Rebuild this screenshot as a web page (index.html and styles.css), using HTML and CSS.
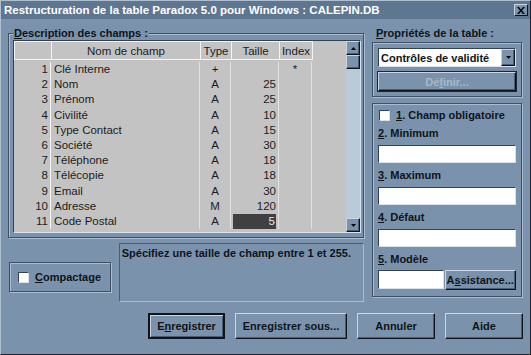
FILE: index.html
```html
<!DOCTYPE html>
<html lang="fr">
  <head>
    <meta charset="UTF-8" />
    <title>Restructuration de la table Paradox</title>
    <link rel="stylesheet" href="styles.css">
  </head>
  <body>
    <div class="window">
      <div class="titlebar">
        <span class="title">Restructuration de la table Paradox 5.0 pour Windows : CALEPIN.DB</span>
        <span class="closeBtn">
          <svg width="8" height="7" viewBox="0 0 8 7"><path d="M0 0h2l2 2.5L6 0h2L5 3.5 8 7H6L4 4.5 2 7H0l3-3.5z" fill="#000"/></svg>
        </span>
      </div>

      <div class="dialog">
        <div class="leftCol">
          <fieldset class="group fields">
            <legend><u>D</u>escription des champs :</legend>
            <div class="gridBox">
              <div class="fieldTable">
                <div class="row head">
                  <div class="c num"></div>
                  <div class="c name">Nom de champ</div>
                  <div class="c type">Type</div>
                  <div class="c size">Taille</div>
                  <div class="c idx">Index</div>
                  <div class="c rest"></div>
                </div>
                <div class="rows">
                  <div class="row"><div class="c num">1</div><div class="c name">Clé Interne</div><div class="c type">+</div><div class="c size"></div><div class="c idx">*</div><div class="c rest"></div></div>
                  <div class="row"><div class="c num">2</div><div class="c name">Nom</div><div class="c type">A</div><div class="c size">25</div><div class="c idx"></div><div class="c rest"></div></div>
                  <div class="row"><div class="c num">3</div><div class="c name">Prénom</div><div class="c type">A</div><div class="c size">25</div><div class="c idx"></div><div class="c rest"></div></div>
                  <div class="row"><div class="c num">4</div><div class="c name">Civilité</div><div class="c type">A</div><div class="c size">10</div><div class="c idx"></div><div class="c rest"></div></div>
                  <div class="row"><div class="c num">5</div><div class="c name">Type Contact</div><div class="c type">A</div><div class="c size">15</div><div class="c idx"></div><div class="c rest"></div></div>
                  <div class="row"><div class="c num">6</div><div class="c name">Société</div><div class="c type">A</div><div class="c size">30</div><div class="c idx"></div><div class="c rest"></div></div>
                  <div class="row"><div class="c num">7</div><div class="c name">Téléphone</div><div class="c type">A</div><div class="c size">18</div><div class="c idx"></div><div class="c rest"></div></div>
                  <div class="row"><div class="c num">8</div><div class="c name">Télécopie</div><div class="c type">A</div><div class="c size">18</div><div class="c idx"></div><div class="c rest"></div></div>
                  <div class="row"><div class="c num">9</div><div class="c name">Email</div><div class="c type">A</div><div class="c size">30</div><div class="c idx"></div><div class="c rest"></div></div>
                  <div class="row"><div class="c num">10</div><div class="c name">Adresse</div><div class="c type">M</div><div class="c size">120</div><div class="c idx"></div><div class="c rest"></div></div>
                  <div class="row"><div class="c num">11</div><div class="c name">Code Postal</div><div class="c type">A</div><div class="c size"><span class="selected">5</span></div><div class="c idx"></div><div class="c rest"></div></div>
                </div>
              </div>
              <div class="scrollbar">
                <div class="scrollBtn">
                  <svg width="5" height="3" viewBox="0 0 5 3"><path d="M2.5 0L5 3H0z" fill="#000"/></svg>
                </div>
                <div class="thumb"></div>
                <div class="track"></div>
                <div class="scrollBtn">
                  <svg width="5" height="3" viewBox="0 0 5 3"><path d="M0 0h5L2.5 3z" fill="#000"/></svg>
                </div>
              </div>
            </div>
          </fieldset>

          <div class="bottomRow">
            <div class="group packBox">
              <span class="checkbox"></span>
              <span class="bold"><u>C</u>ompactage</span>
            </div>
            <div class="message">Spécifiez une taille de champ entre 1 et 255.</div>
          </div>
        </div>

        <div class="rightCol">
          <div class="propsLabel"><u>P</u>ropriétés de la table :</div>
          <div class="group propsBox">
            <div class="select">
              <span>Contrôles de validité</span>
              <span class="dropBtn">
                <svg width="5" height="3" viewBox="0 0 5 3"><path d="M0 0h5L2.5 3z" fill="#000"/></svg>
              </span>
            </div>
            <div class="btn disabled">Dé<u>f</u>inir...</div>
          </div>
          <div class="group validity">
            <div class="checkRow">
              <span class="checkbox"></span>
              <span class="bold"><u>1</u>. Champ obligatoire</span>
            </div>
            <div class="fieldLabel"><u>2</u>. Minimum</div>
            <div class="input"></div>
            <div class="fieldLabel"><u>3</u>. Maximum</div>
            <div class="input"></div>
            <div class="fieldLabel"><u>4</u>. Défaut</div>
            <div class="input"></div>
            <div class="fieldLabel"><u>5</u>. Modèle</div>
            <div class="modelRow">
              <div class="input small"></div>
              <div class="btn assist">A<u>s</u>sistance...</div>
            </div>
          </div>
        </div>

        <div class="buttons">
          <div class="btn default">E<u>n</u>registrer</div>
          <div class="btn wide">Enregistrer sous...</div>
          <div class="btn">Annuler</div>
          <div class="btn">Aide</div>
        </div>
      </div>
    </div>
  </body>
</html>
```

FILE: styles.css
```css
* {
  box-sizing: border-box;
}
body {
  margin: 0;
  font-family: "Liberation Sans", Arial, sans-serif;
  font-size: 11px;
  color: #101418;
}
u {
  text-decoration-thickness: 1px;
  text-underline-offset: 1px;
}
.bold {
  font-weight: bold;
}

.window {
  width: 531px;
  height: 355px;
  background: #7a92ac;
  border: 1px solid;
  border-color: #aebfd0 #1c242c #1c242c #aebfd0;
  display: flex;
  flex-direction: column;
  overflow: hidden;
}
.titlebar {
  height: 18px;
  background: #5e7690;
  display: flex;
  align-items: center;
  justify-content: space-between;
  padding: 0 2px 0 3px;
}
.title {
  color: #fff;
  font-weight: bold;
  font-size: 11.5px;
}
.closeBtn {
  width: 14px;
  height: 12px;
  background: #7a92ac;
  border: 1px solid;
  border-color: #c8d6e4 #101418 #101418 #c8d6e4;
  display: flex;
  align-items: center;
  justify-content: center;
}

.dialog {
  display: grid;
  grid-template-columns: 356px 151px;
  column-gap: 8px;
  padding: 8px 6px 0 7px;
}

/* group boxes */
.group {
  border: 1px solid #3e5064;
  box-shadow: inset 1px 1px 0 #aabdd0, 1px 1px 0 #aabdd0;
}
.fields {
  margin: 0;
  padding: 0 2px 4px 4px;
  height: 211px;
}
.fields legend {
  font-weight: bold;
  line-height: 13px;
  padding: 0 1px;
  background: #7a92ac;
}

.gridBox {
  height: 193px;
  display: flex;
  border: 1px solid;
  border-color: #34424f #d8e2ec #d8e2ec #34424f;
}
.fieldTable {
  flex: 1;
  background: #c3c3c3;
  font-size: 11.5px;
  color: #1c1c1c;
}
.row {
  display: grid;
  grid-template-columns: 37px 149px 31px 48px 33px 1fr;
  height: 15.2px;
  line-height: 15px;
}
.row.head {
  height: 19px;
  line-height: 18px;
  margin-bottom: 2px;
}
.head .c {
  text-align: center;
  border-top: 1px solid #f4f4f4;
  border-left: 1px solid #f4f4f4;
  border-bottom: 1px solid #f4f4f4;
  border-right: none;
}
.head .rest {
  border-top: none;
  border-bottom: none;
}
.c {
  border-right: 1px solid #e2e2e2;
  white-space: nowrap;
  overflow: hidden;
}
.rows .num {
  text-align: right;
  padding-right: 2px;
  border-right: 1px solid #f4f4f4;
}
.rows .name {
  padding-left: 3px;
}
.type,
.idx {
  text-align: center;
}
.rows .size {
  text-align: right;
  padding: 0 2px;
}
.rows .rest {
  border: none;
}
.selected {
  display: block;
  background: #404040;
  color: #e8e8e8;
  padding-right: 1px;
}

.scrollbar {
  width: 14px;
  display: flex;
  flex-direction: column;
  background: #b9cad8;
}
.scrollBtn,
.thumb,
.dropBtn {
  background: #7a92ac;
  border: 1px solid;
  border-color: #c8d6e4 #101418 #101418 #c8d6e4;
  box-shadow: inset -1px -1px 0 #4a5d72;
}
.scrollBtn {
  height: 14px;
  display: flex;
  align-items: center;
  justify-content: center;
}
.thumb {
  height: 14px;
}
.track {
  flex: 1;
}

/* bottom left */
.bottomRow {
  display: flex;
  gap: 8px;
  margin-top: 5px;
}
.packBox {
  width: 102px;
  height: 30px;
  margin: 19px 0 0 1px;
  display: flex;
  align-items: center;
  gap: 6px;
  padding-left: 8px;
}
.checkbox {
  width: 11px;
  height: 11px;
  background: #fff;
  border: 1px solid;
  border-color: #34424f #d8e2ec #d8e2ec #34424f;
}
.message {
  width: 246px;
  height: 59px;
  border: 1px solid;
  border-color: #4a5d72 #aabdd0 #aabdd0 #4a5d72;
  font-weight: bold;
  padding: 3px 2px;
}

/* right column */
.propsLabel {
  font-weight: bold;
  line-height: 13px;
  padding-left: 4px;
  margin-bottom: 2px;
}
.propsBox {
  width: 150px;
  padding: 5px;
  display: flex;
  flex-direction: column;
  gap: 5px;
}
.select {
  height: 19px;
  background: #fff;
  border: 1px solid;
  border-color: #34424f #d8e2ec #d8e2ec #34424f;
  display: flex;
  align-items: center;
  justify-content: space-between;
  font-weight: bold;
  padding-left: 2px;
}
.dropBtn {
  width: 14px;
  height: 17px;
  display: flex;
  align-items: center;
  justify-content: center;
}
.validity {
  width: 150px;
  height: 194px;
  margin-top: 6px;
  padding: 5px;
}
.checkRow {
  display: flex;
  align-items: center;
  gap: 6px;
  height: 12px;
  padding-left: 1px;
}
.fieldLabel {
  font-weight: bold;
  line-height: 13px;
  margin-top: 6px;
}
.input {
  height: 18px;
  margin-top: 5px;
  background: #fff;
  border: 1px solid;
  border-color: #34424f #d8e2ec #d8e2ec #34424f;
}
.modelRow {
  display: flex;
  gap: 1px;
  margin-top: 4px;
}
.modelRow .input {
  margin-top: 0;
  height: 19px;
}
.input.small {
  width: 66px;
}

/* buttons */
.btn {
  display: flex;
  align-items: center;
  justify-content: center;
  font-weight: bold;
  background: #7a92ac;
  border: 1px solid;
  border-color: #c8d6e4 #101418 #101418 #c8d6e4;
  box-shadow: inset -1px -1px 0 #4a5d72;
  height: 19px;
}
.btn.disabled {
  color: #a8b8c8;
  outline: 1px solid #1c242c;
  outline-offset: 0;
}
.btn.assist {
  width: 72px;
  height: 20px;
}
.buttons {
  grid-column: 1 / 3;
  display: flex;
  justify-content: flex-end;
  gap: 10px;
  margin-top: 11px;
}
.buttons .btn {
  width: 78px;
  height: 26px;
}
.buttons .btn.wide {
  width: 112px;
}
.buttons .btn.default {
  width: 77px;
  border: 2px solid #101418;
  box-shadow: inset 1px 1px 0 #c8d6e4, inset -1px -1px 0 #4a5d72;
}
```
